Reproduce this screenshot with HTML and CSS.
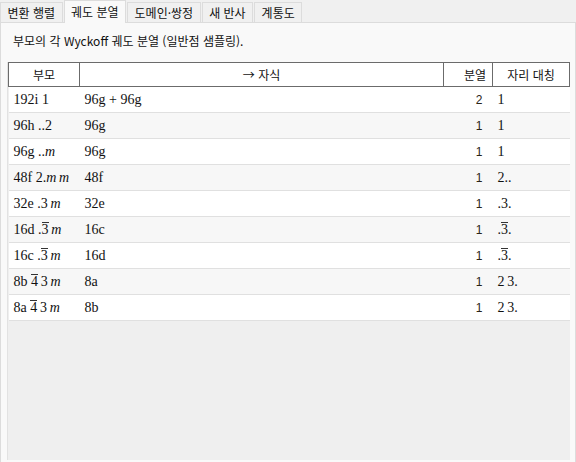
FILE: index.html
```html
<!DOCTYPE html>
<html lang="ko">
<head>
    <meta charset="UTF-8">
    <title>궤도 분열</title>
    <link rel="stylesheet" href="styles.css">
</head>
<body>
    <div class="tabs">
        <div class="tab">변환 행렬</div>
        <div class="tab active">궤도 분열</div>
        <div class="tab">도메인·쌍정</div>
        <div class="tab">새 반사</div>
        <div class="tab">계통도</div>
    </div>
    <div class="panel">
        <p class="caption">부모의 각 Wyckoff 궤도 분열 (일반점 샘플링).</p>
        <div class="view">
            <table class="split">
                <thead>
                    <tr>
                        <th class="c-parent">부모</th>
                        <th class="c-child">→ 자식</th>
                        <th class="c-count">분열</th>
                        <th class="c-sym">자리 대칭</th>
                    </tr>
                </thead>
                <tbody>
                    <tr>
                        <td class="math">192i 1</td>
                        <td class="math">96g + 96g</td>
                        <td class="num">2</td>
                        <td class="math">1</td>
                    </tr>
                    <tr>
                        <td class="math">96h ..2</td>
                        <td class="math">96g</td>
                        <td class="num">1</td>
                        <td class="math">1</td>
                    </tr>
                    <tr>
                        <td class="math">96g ..<i>m</i></td>
                        <td class="math">96g</td>
                        <td class="num">1</td>
                        <td class="math">1</td>
                    </tr>
                    <tr>
                        <td class="math">48f 2.<i>m</i>&thinsp;<i>m</i></td>
                        <td class="math">48f</td>
                        <td class="num">1</td>
                        <td class="math">2..</td>
                    </tr>
                    <tr>
                        <td class="math">32e .3&thinsp;<i>m</i></td>
                        <td class="math">32e</td>
                        <td class="num">1</td>
                        <td class="math">.3.</td>
                    </tr>
                    <tr>
                        <td class="math">16d .<span class="bar">3</span>&thinsp;<i>m</i></td>
                        <td class="math">16c</td>
                        <td class="num">1</td>
                        <td class="math">.<span class="bar">3</span>.</td>
                    </tr>
                    <tr>
                        <td class="math">16c .<span class="bar">3</span>&thinsp;<i>m</i></td>
                        <td class="math">16d</td>
                        <td class="num">1</td>
                        <td class="math">.<span class="bar">3</span>.</td>
                    </tr>
                    <tr>
                        <td class="math">8b&nbsp;<span class="bar">4</span>&thinsp;3&thinsp;<i>m</i></td>
                        <td class="math">8a</td>
                        <td class="num">1</td>
                        <td class="math">2&thinsp;3.</td>
                    </tr>
                    <tr>
                        <td class="math">8a&nbsp;<span class="bar">4</span>&thinsp;3&thinsp;<i>m</i></td>
                        <td class="math">8b</td>
                        <td class="num">1</td>
                        <td class="math">2&thinsp;3.</td>
                    </tr>
                </tbody>
            </table>
        </div>
    </div>
</body>
</html>
```

FILE: styles.css
```css
body {
    margin: 0;
    background-color: #f0f0f0;
    font-family: "Noto Sans CJK KR", "Noto Sans", sans-serif;
    font-size: 12px;
    color: #111;
}
.tabs {
    display: flex;
    height: 22px;
    align-items: flex-end;
    position: relative;
    z-index: 1;
}
.tab {
    height: 19px;
    line-height: 20px;
    padding: 0 6.5px;
    margin-right: 1px;
    background-color: #f0f0f0;
    border: 1px solid #dcdcdc;
    border-bottom: none;
    color: #111;
}
.tab.active {
    height: 22px;
    line-height: 22px;
    background-color: #f9f9f9;
    margin-bottom: -1px;
}
.panel {
    height: 437px;
    background-color: #f9f9f9;
    border: 1px solid #dcdcdc;
    padding: 0 5px 5px 6px;
    display: flex;
    flex-direction: column;
}
.caption {
    margin: 0;
    height: 39px;
    line-height: 36px;
    padding-left: 6px;
}
.view {
    flex: 1;
    background-color: #efefef;
    border-left: 1px solid #e2e2e2;
}
.split {
    width: 100%;
    border-collapse: collapse;
}
.split th {
    height: 23px;
    padding: 0 6px;
    font-weight: normal;
    background-color: #fff;
    border: 1px solid #6b6b6b;
}
.split th.c-parent {
    width: 58px;
}
.split th.c-count {
    width: 36px;
    text-align: right;
}
.split th.c-sym {
    width: 64px;
}
.split td {
    height: 25px;
    padding: 0 6px 0 5px;
    border-bottom: 1px solid #e0e0e0;
    white-space: nowrap;
}
.split tbody tr {
    background-color: #fff;
}
.split tbody tr:nth-child(even) {
    background-color: #f7f7f7;
}
.math {
    font-family: "Liberation Serif", "DejaVu Serif", serif;
    font-size: 14px;
}
.math i {
    font-style: italic;
}
.split td.num {
    text-align: right;
    padding-right: 10px;
    font-family: "Liberation Sans", Arial, sans-serif;
    font-size: 12px;
    color: #2a2418;
}
.bar {
    display: inline-block;
    line-height: 13px;
    border-top: 1px solid #333;
}
```
